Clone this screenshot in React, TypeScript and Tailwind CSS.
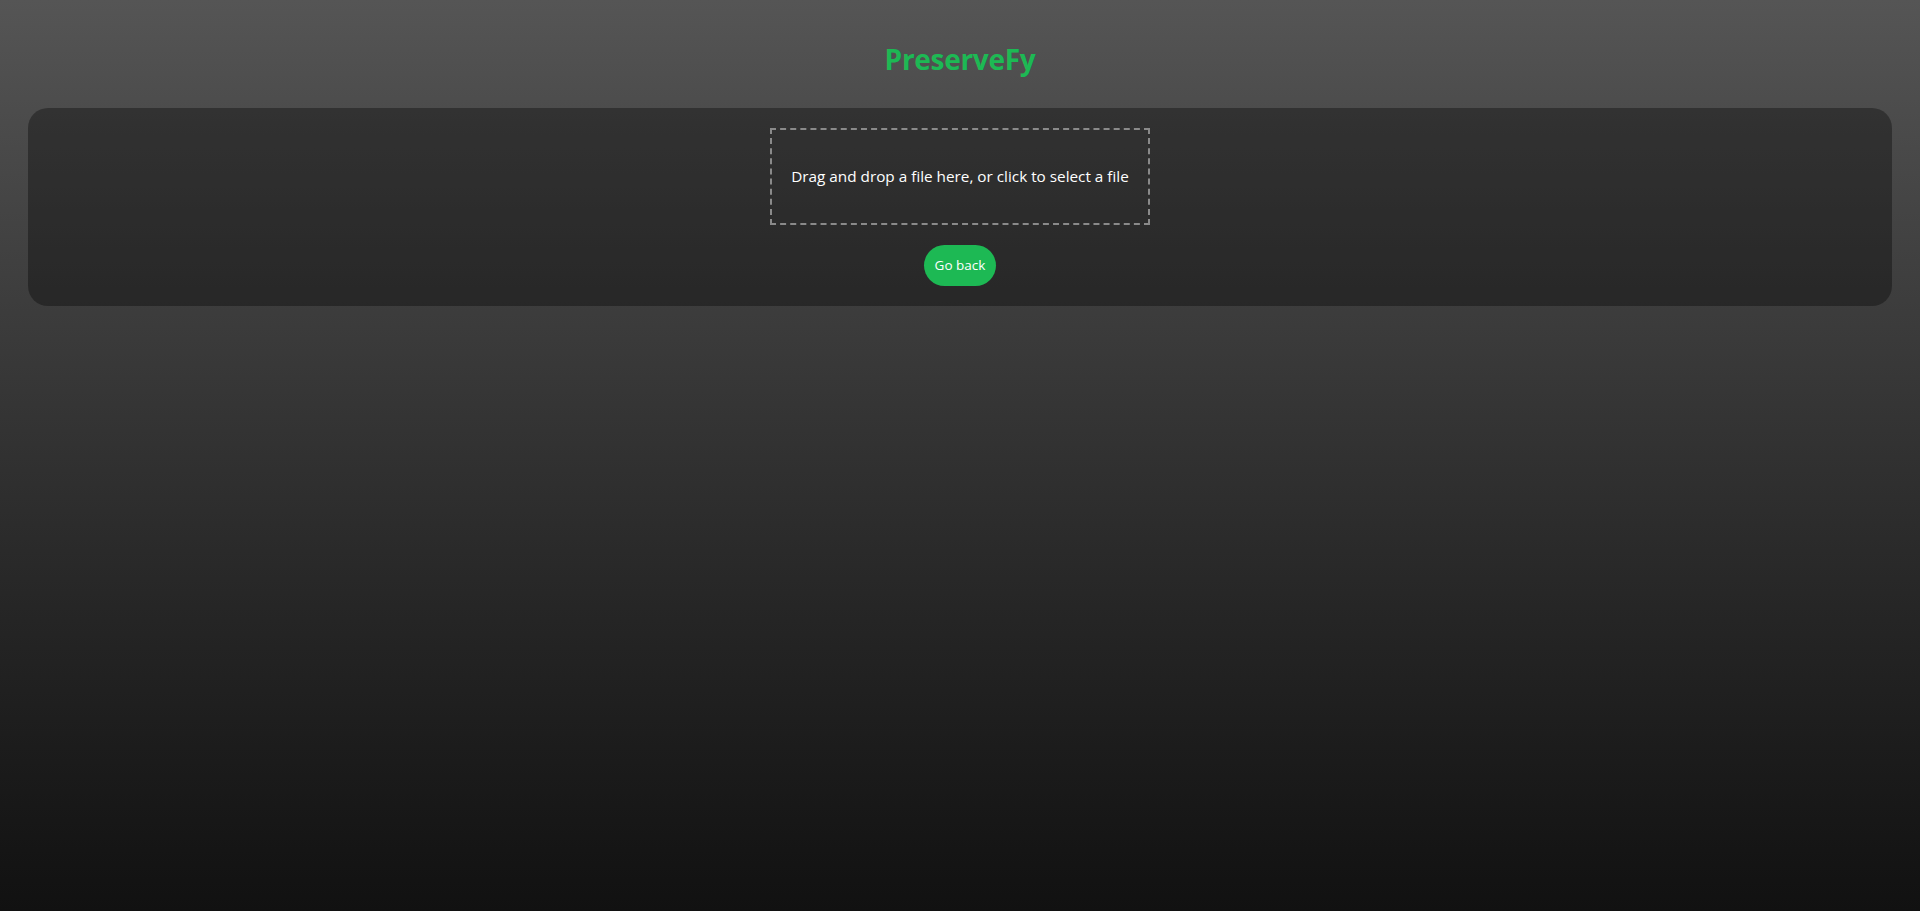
import React from 'react';

const App = () => {
  return (
    <div
      className="min-h-[911px] w-full bg-gradient-to-b from-[#555555] to-[#111111] px-[28px] pt-[34px]"
      style={{fontFamily: '"Open Sans", "Noto Sans", sans-serif'}}
    >
      <h1 className="text-center text-[28px] font-bold leading-[50px] text-[#1db954] mb-[24px] tracking-[-0.3px]">
        PreserveFy
      </h1>
      <div className="flex flex-col items-center gap-[20px] rounded-[20px] bg-[rgba(0,0,0,0.34)] p-[20px]">
        <div className="flex h-[97px] w-[380px] cursor-pointer items-center justify-center border-2 border-dashed border-[#8a8a8a] text-[15.3px] text-white">
          Drag and drop a file here, or click to select a file
        </div>
        <button className="h-[41px] w-[72px] rounded-full bg-[#1db954] text-[13.5px] text-white">
          Go back
        </button>
      </div>
    </div>
  );
};

export default App;
